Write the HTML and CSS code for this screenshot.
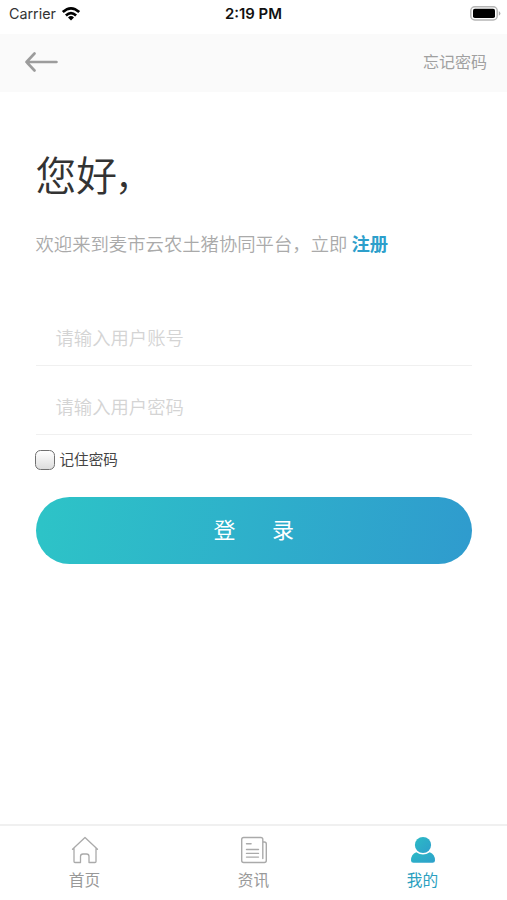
FILE: index.html
```html
<!DOCTYPE html>
<html lang="zh-CN">
<head>
<meta charset="utf-8">
<title>登录</title>
<link rel="stylesheet" href="styles.css">
</head>
<body>
<div class="app">
  <div class="status">
    <div class="carrier"><span>Carrier</span>
      <svg width="20" height="16" viewBox="0 0 20 16"><g fill="none" stroke="#000" stroke-width="2.7"><path d="M1.8 6.1Q10-1.5 18.2 6.1"/><path d="M4.9 9.4Q10 4.7 15.1 9.4"/></g><path d="M7 11.4Q10 8.8 13 11.4L10 14.4Z"/></svg>
    </div>
    <div class="time">2:19 PM</div>
    <div class="battery">
      <svg width="31" height="15" viewBox="0 0 31 15"><rect x=".8" y=".8" width="26.4" height="13.2" rx="4" fill="#fff" stroke="#b5b5b5" stroke-width="1.5"/><rect x="3" y="2.8" width="22" height="9.2" rx="1.8"/><path d="M28.8 5Q32 7.4 28.8 9.8Z" fill="#aaa"/></svg>
    </div>
  </div>
  <header class="nav">
    <svg width="34" height="20" viewBox="0 0 34 20" fill="none" stroke="#9c9c9c" stroke-width="2.6" stroke-linecap="round" stroke-linejoin="round"><path d="M9.5 1.5L1.5 10l8 8.5M1.5 10h30"/></svg>
    <a class="forgot">忘记密码</a>
  </header>
  <main class="content">
    <h1>您好<span class="comma">，</span></h1>
    <p class="welcome">欢迎来到麦市云农土猪协同平台，立即 <a class="register">注册</a></p>
    <div class="field">请输入用户账号</div>
    <div class="field">请输入用户密码</div>
    <div class="remember"><span class="checkbox"></span><span class="remember-text">记住密码</span></div>
    <div class="login"><span>登</span><span>录</span></div>
  </main>
  <footer class="tabs">
    <div class="tab">
      <svg width="28" height="28" viewBox="0 0 28 28" fill="none" stroke="#aaa" stroke-width="1.3" stroke-linejoin="round" stroke-linecap="round"><path d="M1.5 13.2L14 1.5l12.5 11.7M3 12v13.5q0 1 1 1h5.5v-6q0-2.5 2.5-2.5h3.5q2.5 0 2.5 2.5v6H24q1 0 1-1V12"/></svg>
      <span>首页</span>
    </div>
    <div class="tab">
      <svg width="28" height="28" viewBox="0 0 28 28" fill="none" stroke="#aaa" stroke-width="1.4" stroke-linecap="round"><path d="M22.8 22.5V3.5q0-2-2-2H3.7q-2 0-2 2v21q0 2 2 2h20.6q2 0 2-2V8q0-2-2-2h-1.5"/><path d="M6.5 7.7h4.6M6.5 13.5h12M6.5 17.4h12M6.5 21.1h12"/></svg>
      <span>资讯</span>
    </div>
    <div class="tab active">
      <svg width="28" height="28" viewBox="0 0 28 28"><defs><linearGradient id="person" x1="0" y1="0" x2="1" y2="1"><stop offset="0" stop-color="#2cbbc5"/><stop offset="1" stop-color="#2d9fcb"/></linearGradient></defs><g fill="url(#person)"><circle cx="14" cy="9" r="8.1"/><path d="M7.3 16.2Q14 20.9 20.7 16.2Q26 18 26 24.5Q26 26.8 23.5 26.8h-19Q2 26.8 2 24.5Q2 18 7.3 16.2Z"/></g></svg>
      <span>我的</span>
    </div>
  </footer>
</div>
</body>
</html>
```
FILE: styles.css
```css
* { box-sizing: border-box; }
body { margin: 0; background: #fff; font-family: "Noto Sans CJK SC", sans-serif; }
.app { height: 900px; display: flex; flex-direction: column; overflow: hidden; }
svg { display: block; flex: none; }
.status { height: 34px; display: grid; grid-template-columns: 1fr auto 1fr; padding: 0 6px 7px 9px; align-items: center; font: 14.3px/20px Inter, sans-serif; color: #111; }
.carrier { display: flex; align-items: center; gap: 5px; color: #333; }
.time { font-weight: 600; font-size: 14.9px; margin-right: 3px; }
.battery { justify-self: end; }
.nav { height: 58px; background: #fafafa; display: flex; align-items: center; justify-content: space-between; padding: 0 20px 2px 25px; }
.forgot { font-size: 16px; line-height: 24px; color: #a0a0a0; margin-top: -2px; }
.content { flex: 1; padding: 52px 35px 0 35.5px; }
h1 { margin: 0; font-size: 40.8px; line-height: 60px; font-weight: 350; color: #333; }
.comma { margin-left: -2px; font-size: 37px; line-height: 1; }
.welcome { margin: 25px 0 54px; font-size: 18.35px; line-height: 28px; font-weight: 350; color: #aaa; white-space: nowrap; }
.register { color: #2d9fcb; font-weight: 700; }
.field { height: 55px; padding: 12px 0 0 20px; margin-bottom: 13.5px; border-bottom: 1px solid #f0f0f0; font-size: 18.35px; line-height: 28px; font-weight: 350; color: #d4d4d4; }
.remember { display: flex; align-items: center; gap: 5px; height: 22px; margin: 14.5px 0 0 -1px; font-size: 14.6px; line-height: 22px; color: #444; }
.remember-text { margin-top: -3px; }
.checkbox { width: 20px; height: 20px; border: 1.7px solid #707070; border-radius: 5.5px; background: linear-gradient(#fff, #ddd); }
.login { height: 67px; margin-top: 26px; padding-bottom: 5px; border-radius: 34px; background: linear-gradient(100deg, #2dc4c7, #2f9bce); display: flex; align-items: center; justify-content: center; gap: 36.5px; color: #fff; font-size: 22px; line-height: 32px; }
.tabs { height: 76px; border-top: 2px solid #f0f0f0; display: grid; grid-template-columns: repeat(3, 1fr); }
.tab { display: flex; flex-direction: column; align-items: center; padding-top: 10px; gap: 4px; font-size: 15.7px; line-height: 24px; color: #999; }
.active { color: #2c9fc0; }
```
